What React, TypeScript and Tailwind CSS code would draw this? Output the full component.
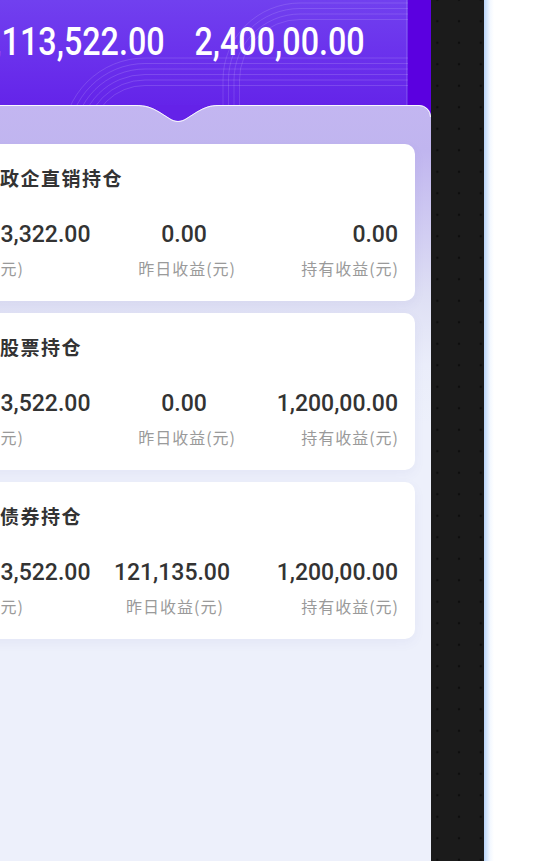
import React from 'react'

interface Holding {
  title: string
  total: string
  yesterday: string
  hold: string
}

const holdings: Holding[] = [
  { title: '政企直销持仓', total: '111,113,322.00', yesterday: '0.00', hold: '0.00' },
  { title: '股票持仓', total: '111,113,522.00', yesterday: '0.00', hold: '1,200,00.00' },
  { title: '债券持仓', total: '111,113,522.00', yesterday: '121,135.00', hold: '1,200,00.00' },
]

const num = "font-['Roboto',sans-serif]"
const cjk = "font-['Noto_Sans_CJK_SC',sans-serif]"

function HeaderLines() {
  // decorative concentric strokes on the header background
  const top = [0, 1, 2, 3].map((i) => {
    const y = 3 + i * 5.5
    const r = 80 - y
    return `M408 ${y} H300 A${r} ${r} 0 0 0 ${300 - r} 80 V120`
  })
  const bottom = [0, 1, 2, 3, 4, 5].map((i) => {
    const y = 58 + i * 5.5
    const r = 140 - y
    return `M408 ${y} H145 A${r} ${r} 0 0 0 ${145 - r} 140`
  })
  return (
    <svg className="absolute left-[106px] top-0" width="408" height="120" viewBox="0 0 408 120" fill="none">
      {top.map((d) => (
        <path key={d} d={d} stroke="rgba(255,255,255,0.13)" strokeWidth="1" />
      ))}
      {bottom.map((d) => (
        <path key={d} d={d} stroke="rgba(255,255,255,0.14)" strokeWidth="1" />
      ))}
      <line x1="406.5" y1="0" x2="406.5" y2="120" stroke="rgba(255,255,255,0.12)" />
    </svg>
  )
}

function Notch() {
  return (
    <svg className="absolute left-[106px] top-0" width="431" height="20" viewBox="0 0 431 20" fill="none">
      <path
        d="M135 0 C146 0 151 2 159 6.5 L170 13.5 C175 16.8 181 16.8 186 13.5 L197 6.5 C205 2 210 0 219 0 Z"
        fill="#6422e8"
      />
      <path
        d="M0 0.5 H135 C146 0.5 151 2.5 159 7 L170 14 C175 17.3 181 17.3 186 14 L197 7 C205 2.5 210 0.5 219 0.5 H419 A11.5 11.5 0 0 1 430.5 12"
        stroke="rgba(255,255,255,0.9)"
        strokeWidth="1"
      />
    </svg>
  )
}

function HoldingCard({ item }: { item: Holding }) {
  return (
    <div className="h-[157px] rounded-[10px] bg-white pl-4 pr-[17px] pt-[22px] shadow-[0_4px_12px_rgba(90,90,170,0.06)]">
      <div className={`pl-[74px] text-[19px] leading-6 font-bold tracking-[1.5px] text-[#333] ${cjk}`}>{item.title}</div>
      <div className="mt-[31px] flex">
        <div className="min-w-0 flex-1 whitespace-nowrap">
          <div className={`pl-[4px] text-[23px] leading-7 font-medium text-[#333] ${num}`}>{item.total}</div>
          <div className={`mt-[9px] text-[16px] leading-5 tracking-[1px] text-[#9a9a9a] ${cjk}`}>持仓金额(元)</div>
        </div>
        <div className="whitespace-nowrap text-center">
          <div className={`pr-[6px] text-[23px] leading-7 font-medium text-[#333] ${num}`}>{item.yesterday}</div>
          <div className={`mt-[9px] text-[16px] leading-5 tracking-[1px] text-[#9a9a9a] ${cjk}`}>昨日收益(元)</div>
        </div>
        <div className="w-[162px] shrink-0 whitespace-nowrap text-right">
          <div className={`text-[23px] leading-7 font-medium text-[#333] ${num}`}>{item.hold}</div>
          <div className={`-mr-[1px] mt-[9px] text-[16px] leading-5 tracking-[1px] text-[#9a9a9a] ${cjk}`}>持有收益(元)</div>
        </div>
      </div>
    </div>
  )
}

export default function App() {
  return (
    <div className="flex h-[861px] w-[539px] overflow-hidden">
      <div className="relative w-[431px] shrink-0 overflow-hidden bg-[#edf0fb]">
        <div className="-ml-[106px] flex h-full w-[537px] flex-col">
          <div className="relative h-[120px] shrink-0 bg-[#5b00e0]">
            <div className="absolute inset-y-0 left-0 w-[514px] bg-[linear-gradient(180deg,#7140ef_0%,#6a30ec_50%,#6220e8_100%)]" />
            <HeaderLines />
            <div className="relative pl-[82px] pt-[20px]">
              <div className={`flex w-max origin-left scale-x-[0.85] gap-[35px] text-[38px] leading-[44px] font-medium text-white ${num}`}>
                <span>2,113,522.00</span>
                <span>2,400,00.00</span>
              </div>
            </div>
          </div>
          <div className="relative -mt-[15px] flex-1 rounded-tr-[12px] bg-[linear-gradient(180deg,#c3b6f1_0px,#c0b5ef_45px,#dedff4_190px,#eaedfa_260px,#edf0fb_320px)] pt-[39px]">
            <Notch />
            <div className="flex flex-col gap-3 px-4">
              {holdings.map((h) => (
                <HoldingCard key={h.title} item={h} />
              ))}
            </div>
          </div>
        </div>
      </div>
      <div className="w-[53px] shrink-0 bg-[#1b1b1b] bg-[radial-gradient(circle,#0e0e0e_1px,transparent_1.6px)] bg-[length:21.7px_21.5px] bg-[position:-4.5px_10.5px]" />
      <div className="flex-1 bg-[linear-gradient(90deg,#b9d5fb_0px,#d6e7fd_3px,#f3f8ff_6px,#ffffff_10px)]" />
    </div>
  )
}
